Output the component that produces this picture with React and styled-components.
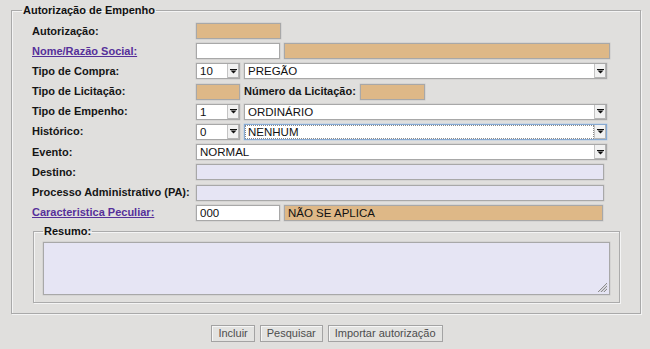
import React from "react";
import styled, { createGlobalStyle, css } from "styled-components";

const Global = createGlobalStyle`
  html, body { margin: 0; padding: 0; background: #e0dfdd; }
  body { font-family: "Liberation Sans", Arial, sans-serif; font-size: 11px; color: #111; }
  * { box-sizing: border-box; }
`;

const Page = styled.div`
  width: 650px;
  height: 349px;
  padding: 4px 9px 0 11px;
`;

const Frame = styled.fieldset`
  margin: 0;
  width: 100%;
  padding: 6px 20px 10px 20px;
  border: 1px solid #a9a9a9;
  box-shadow: inset 1px 1px 0 #f4f4f4, 1px 1px 0 #f4f4f4;
`;

const Legend = styled.legend`
  margin-left: ${(p) => p.$shift || 0}px;
  padding: 0 1px;
  font-weight: bold;
  font-size: 11px;
  line-height: 13px;
  color: #111;
`;

const Grid = styled.div`
  display: grid;
  grid-template-columns: 164px 1fr;
  grid-auto-rows: 16px;
  row-gap: 4.2px;
  align-items: center;
`;

const Label = styled.span`
  font-weight: bold;
  font-size: 11px;
  line-height: 13px;
  color: #151515;
  white-space: nowrap;
  ${(p) =>
    p.$link &&
    css`
      color: #56309a;
      text-decoration: underline;
    `}
`;

const Cell = styled.div`
  display: flex;
  align-items: center;
  gap: 4px;
  height: 16px;
`;

const fills = {
  beige: "#deb887",
  white: "#ffffff",
  lavender: "#e6e5f4",
};

const Field = styled.div`
  width: ${(p) => p.$w}px;
  height: 16px;
  background: ${(p) => fills[p.$fill || "white"]};
  border: 1px solid #a8a8a8;
  box-shadow: 0 0 0 0.5px #c9c9c9;
  padding: 0 3px;
  font-size: 11.5px;
  line-height: 14px;
  color: #111;
  white-space: nowrap;
  overflow: hidden;
`;

const SelectBox = styled.div`
  width: ${(p) => p.$w}px;
  height: 16px;
  display: flex;
  background: #fff;
  border: 1px solid ${(p) => (p.$focus ? "#86a9d2" : "#a8a8a8")};
  box-shadow: 0 0 0 0.5px ${(p) => (p.$focus ? "#b7cde6" : "#c9c9c9")};
`;

const SelectText = styled.div`
  flex: 1;
  padding: 0 3px;
  font-size: 11.5px;
  line-height: 14px;
  color: #111;
  white-space: nowrap;
  overflow: hidden;
  ${(p) => p.$focus && css`outline: 1px dotted #8a8a8a; outline-offset: -1px;`}
`;

const Arrow = styled.div`
  width: 12px;
  display: flex;
  align-items: center;
  justify-content: center;
  background: #f1f1f1;
  border-left: 1px solid #c4c4c4;
  box-shadow: inset -1px -1px 0 #b5b5b5;
`;

const Tri = () => (
  <svg width="7" height="5" viewBox="0 0 7 5">
    <rect x="0" y="0" width="7" height="1" fill="#111" />
    <path d="M0.5 1.5 L6.5 1.5 L3.5 4.5 Z" fill="#111" />
  </svg>
);

const Select = ({ w, value, focus }) => (
  <SelectBox $w={w} $focus={focus}>
    <SelectText $focus={focus}>{value}</SelectText>
    <Arrow>
      <Tri />
    </Arrow>
  </SelectBox>
);

const SubFrame = styled.fieldset`
  margin: 4px 0 0 1px;
  width: 587px;
  padding: 4px 8px 7px 9px;
  border: 1px solid #ababab;
  box-shadow: inset 1px 1px 0 #f4f4f4, 1px 1px 0 #f4f4f4;
`;

const TextArea = styled.div`
  position: relative;
  width: 567px;
  height: 53px;
  background: #e6e5f4;
  border: 1px solid #a8a8a8;
  box-shadow: 0 0 0 0.5px #c9c9c9;
`;

const Grip = styled.svg`
  position: absolute;
  right: 1px;
  bottom: 1px;
`;

const Buttons = styled.div`
  display: flex;
  justify-content: center;
  gap: 5px;
  margin: 11px 0 0 2px;
`;

const Button = styled.button`
  height: 17px;
  padding: 0 6px;
  font-family: "Liberation Sans", Arial, sans-serif;
  font-size: 11px;
  line-height: 15px;
  color: #4d4d4d;
  background: #e3e3e1;
  border: 1px solid #a3a3a3;
  box-shadow: inset 1px 1px 0 #f6f6f6;
`;

export default function App() {
  return (
    <Page>
      <Global />
      <Frame>
        <Legend $shift={-10}>Autorização de Empenho</Legend>
        <Grid>
          <Label>Autorização:</Label>
          <Cell>
            <Field $w={85} $fill="beige" />
          </Cell>

          <Label $link>Nome/Razão Social:</Label>
          <Cell>
            <Field $w={84} />
            <Field $w={326} $fill="beige" />
          </Cell>

          <Label>Tipo de Compra:</Label>
          <Cell>
            <Select w={44} value="10" />
            <Select w={363} value="PREGÃO" />
          </Cell>

          <Label>Tipo de Licitação:</Label>
          <Cell>
            <Field $w={44} $fill="beige" />
            <Label>Número da Licitação:</Label>
            <Field $w={65} $fill="beige" />
          </Cell>

          <Label>Tipo de Empenho:</Label>
          <Cell>
            <Select w={44} value="1" />
            <Select w={363} value="ORDINÁRIO" />
          </Cell>

          <Label>Histórico:</Label>
          <Cell>
            <Select w={44} value="0" />
            <Select w={363} value="NENHUM" focus />
          </Cell>

          <Label>Evento:</Label>
          <Cell>
            <Select w={411} value="NORMAL" />
          </Cell>

          <Label>Destino:</Label>
          <Cell>
            <Field $w={408} $fill="lavender" />
          </Cell>

          <Label>Processo Administrativo (PA):</Label>
          <Cell>
            <Field $w={408} $fill="lavender" />
          </Cell>

          <Label $link>Caracteristica Peculiar:</Label>
          <Cell>
            <Field $w={84}>000</Field>
            <Field $w={319} $fill="beige">NÃO SE APLICA</Field>
          </Cell>
        </Grid>

        <SubFrame>
          <Legend>Resumo:</Legend>
          <TextArea>
            <Grip width="11" height="11" viewBox="0 0 11 11">
              <path d="M10 1 L1 10 M10 4 L4 10 M10 7 L7 10" stroke="#8e8e8e" strokeWidth="1" />
              <path d="M10 2.5 L2.5 10 M10 5.5 L5.5 10" stroke="#c8c8c8" strokeWidth="1" />
            </Grip>
          </TextArea>
        </SubFrame>
      </Frame>
      <Buttons>
        <Button>Incluir</Button>
        <Button>Pesquisar</Button>
        <Button>Importar autorização</Button>
      </Buttons>
    </Page>
  );
}
